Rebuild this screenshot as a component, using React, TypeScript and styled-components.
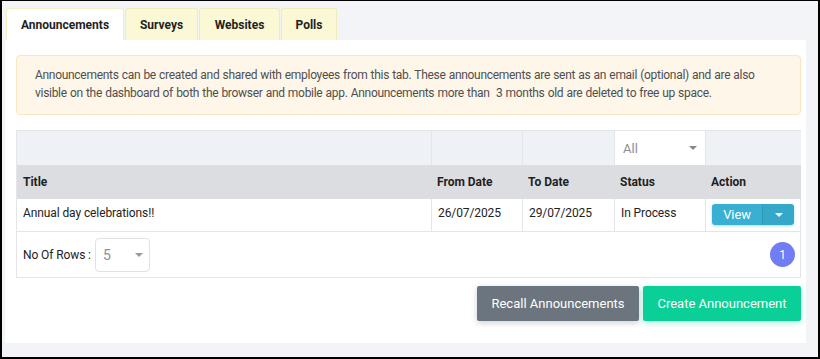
import styled, { createGlobalStyle } from "styled-components";

const GlobalStyle = createGlobalStyle`
  html, body {
    margin: 0;
    padding: 0;
    background: #f3f4f7;
  }
  body {
    font-family: Roboto, "Liberation Sans", sans-serif;
    color: #212529;
  }
`;

const Frame = styled.div`
  box-sizing: border-box;
  width: 820px;
  height: 359px;
  border-style: solid;
  border-color: #000;
  border-width: 1px 2px 2px 2px;
  background: #f3f4f7;
  padding: 7px 12px 14px 3px;
  display: flex;
  flex-direction: column;
  overflow: hidden;
`;

const TabBar = styled.div`
  display: flex;
  height: 32px;
  padding-left: 1px;
`;

const Tab = styled.div<{ $active?: boolean; $w: number }>`
  display: flex;
  align-items: center;
  justify-content: center;
  box-sizing: border-box;
  width: ${(p) => p.$w}px;
  height: 32px;
  font-size: 12px;
  font-weight: 700;
  color: #1f1f1f;
  background: ${(p) => (p.$active ? "#ffffff" : "#fbf8d6")};
  border: 1px solid ${(p) => (p.$active ? "#f3eec4" : "#f1ebb8")};
  border-bottom: none;
  border-radius: 3px 3px 0 0;
  margin-right: 1px;
`;

const Card = styled.div`
  flex: 1;
  background: #fff;
  padding: 15px 5px 0 11px;
  display: flex;
  flex-direction: column;
`;

const Note = styled.div`
  box-sizing: border-box;
  height: 60px;
  background: #fef6e9;
  border: 1px solid #fbe6c3;
  border-radius: 4px;
  padding: 10px 18px;
  font-size: 12px;
  letter-spacing: -0.3px;
  word-spacing: 0.5px;
  line-height: 18px;
  color: #4f4f4f;
`;

const Table = styled.div`
  margin-top: 15px;
  border: 1px solid #e3e5e8;
  display: grid;
  grid-template-columns: 414px 91px 92px 91px 1fr;
`;

const FilterCell = styled.div<{ $white?: boolean }>`
  height: 34px;
  background: ${(p) => (p.$white ? "#fff" : "#eef1f5")};
  border-left: 1px solid #e3e5e8;
  &:first-child {
    border-left: none;
  }
  display: flex;
  align-items: center;
  justify-content: space-between;
  padding: 0 8px;
  font-size: 13px;
  color: #8a8f96;
`;

const HeadCell = styled.div`
  height: 34px;
  background: #dcdde1;
  display: flex;
  align-items: center;
  padding: 0 6px;
  font-size: 12px;
  font-weight: 700;
  color: #1f1f1f;
`;

const BodyCell = styled.div`
  height: 33px;
  border-left: 1px solid #e3e5e8;
  border-bottom: 1px solid #e3e5e8;
  &:nth-child(5n + 1) {
    border-left: none;
  }
  display: flex;
  align-items: flex-start;
  padding: 7px 6px 0;
  box-sizing: border-box;
  font-size: 12px;
  letter-spacing: -0.1px;
  color: #222;
`;

const ActionCell = styled(BodyCell)`
  padding: 5px 7px 0 6px;
`;

const Caret = styled.span<{ $color?: string }>`
  width: 0;
  height: 0;
  border-left: 4px solid transparent;
  border-right: 4px solid transparent;
  border-top: 4px solid ${(p) => p.$color || "#888"};
`;

const SplitButton = styled.div`
  display: flex;
  height: 21px;
  width: 82px;
  border-radius: 3px;
  overflow: hidden;
  box-shadow: 0 1px 3px rgba(58, 175, 212, 0.45);
`;

const SplitMain = styled.div`
  flex: 1;
  display: flex;
  align-items: center;
  justify-content: center;
  background: #39afd1;
  color: #fff;
  font-size: 13px;
`;

const SplitToggle = styled.div`
  width: 31px;
  display: flex;
  align-items: center;
  justify-content: center;
  background: #35a7c8;
  border-left: 1px solid #3199b8;
`;

const FooterRow = styled.div`
  grid-column: 1 / -1;
  height: 45px;
  display: flex;
  align-items: center;
  justify-content: space-between;
  padding: 0 6px;
  font-size: 12px;
  letter-spacing: -0.1px;
  color: #222;
`;

const RowsPicker = styled.div`
  display: flex;
  align-items: center;
`;

const RowsSelect = styled.div`
  box-sizing: border-box;
  margin-left: 4px;
  width: 55px;
  height: 34px;
  border: 1px solid #e0e2e5;
  border-radius: 4px;
  display: flex;
  align-items: center;
  justify-content: space-between;
  padding: 0 6px 0 7px;
  font-size: 14px;
  color: #8a8f96;
`;

const PageDot = styled.div`
  width: 25px;
  height: 25px;
  border-radius: 50%;
  background: #727cf5;
  color: #fff;
  font-size: 12px;
  display: flex;
  align-items: center;
  justify-content: center;
`;

const Actions = styled.div`
  display: flex;
  justify-content: flex-end;
  gap: 4px;
  margin-top: 8px;
`;

const ActionButton = styled.div<{ $bg: string; $w: number }>`
  width: ${(p) => p.$w}px;
  height: 35px;
  border-radius: 2px;
  background: ${(p) => p.$bg};
  color: #fff;
  font-size: 13px;
  display: flex;
  align-items: center;
  justify-content: center;
  box-shadow: 0 2px 6px ${(p) => p.$bg}55;
`;

const columns = ["Title", "From Date", "To Date", "Status", "Action"];

export default function App() {
  return (
    <>
      <GlobalStyle />
      <Frame>
        <TabBar>
          <Tab $active $w={118}>Announcements</Tab>
          <Tab $w={73}>Surveys</Tab>
          <Tab $w={81}>Websites</Tab>
          <Tab $w={56}>Polls</Tab>
        </TabBar>
        <Card>
          <Note>
            Announcements can be created and shared with employees from this tab. These announcements are sent as an email (optional) and are also visible on the dashboard of both the browser and mobile app. Announcements more than&nbsp; 3 months old are deleted to free up space.
          </Note>
          <Table>
            <FilterCell />
            <FilterCell />
            <FilterCell />
            <FilterCell $white>
              All <Caret />
            </FilterCell>
            <FilterCell />
            {columns.map((c) => (
              <HeadCell key={c}>{c}</HeadCell>
            ))}
            <BodyCell>Annual day celebrations!!</BodyCell>
            <BodyCell>26/07/2025</BodyCell>
            <BodyCell>29/07/2025</BodyCell>
            <BodyCell>In Process</BodyCell>
            <ActionCell>
              <SplitButton>
                <SplitMain>View</SplitMain>
                <SplitToggle>
                  <Caret $color="#fff" />
                </SplitToggle>
              </SplitButton>
            </ActionCell>
            <FooterRow>
              <RowsPicker>
                No Of Rows :
                <RowsSelect>
                  5 <Caret $color="#999" />
                </RowsSelect>
              </RowsPicker>
              <PageDot>1</PageDot>
            </FooterRow>
          </Table>
          <Actions>
            <ActionButton $bg="#6c757d" $w={162}>Recall Announcements</ActionButton>
            <ActionButton $bg="#0acf97" $w={158}>Create Announcement</ActionButton>
          </Actions>
        </Card>
      </Frame>
    </>
  );
}
